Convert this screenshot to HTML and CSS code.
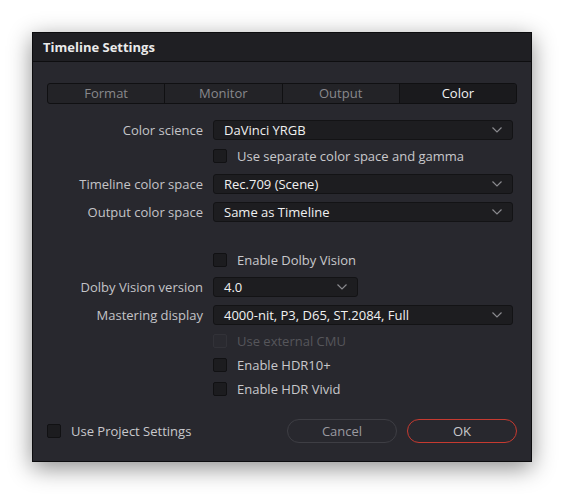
FILE: index.html
```html
<!DOCTYPE html>
<html>
<head>
<meta charset="utf-8">
<link rel="stylesheet" href="styles.css">
</head>
<body>
<div class="dialog">
  <div class="titlebar">Timeline Settings</div>
  <div class="body">
    <div class="tabs">
      <div class="tab">Format</div>
      <div class="tab">Monitor</div>
      <div class="tab">Output</div>
      <div class="tab active">Color</div>
    </div>
    <div class="form">
      <div class="row first">
        <div class="label">Color science</div>
        <div class="select full"><span>DaVinci YRGB</span><svg class="chev" width="10" height="6" viewBox="0 0 10 6"><path d="M0.5 0.5 L5 5 L9.5 0.5" fill="none" stroke="#8a8a8e" stroke-width="1.2"/></svg></div>
      </div>
      <div class="row tight">
        <div class="label"></div>
        <label class="check"><span class="box"></span><span>Use separate color space and gamma</span></label>
      </div>
      <div class="row">
        <div class="label">Timeline color space</div>
        <div class="select full"><span>Rec.709 (Scene)</span><svg class="chev" width="10" height="6" viewBox="0 0 10 6"><path d="M0.5 0.5 L5 5 L9.5 0.5" fill="none" stroke="#8a8a8e" stroke-width="1.2"/></svg></div>
      </div>
      <div class="row">
        <div class="label">Output color space</div>
        <div class="select full"><span>Same as Timeline</span><svg class="chev" width="10" height="6" viewBox="0 0 10 6"><path d="M0.5 0.5 L5 5 L9.5 0.5" fill="none" stroke="#8a8a8e" stroke-width="1.2"/></svg></div>
      </div>
      <div class="row section">
        <div class="label"></div>
        <label class="check"><span class="box"></span><span>Enable Dolby Vision</span></label>
      </div>
      <div class="row snug">
        <div class="label">Dolby Vision version</div>
        <div class="select short"><span>4.0</span><svg class="chev" width="10" height="6" viewBox="0 0 10 6"><path d="M0.5 0.5 L5 5 L9.5 0.5" fill="none" stroke="#8a8a8e" stroke-width="1.2"/></svg></div>
      </div>
      <div class="row">
        <div class="label">Mastering display</div>
        <div class="select full"><span>4000-nit, P3, D65, ST.2084, Full</span><svg class="chev" width="10" height="6" viewBox="0 0 10 6"><path d="M0.5 0.5 L5 5 L9.5 0.5" fill="none" stroke="#8a8a8e" stroke-width="1.2"/></svg></div>
      </div>
      <div class="row tight">
        <div class="label"></div>
        <label class="check disabled"><span class="box"></span><span>Use external CMU</span></label>
      </div>
      <div class="row close">
        <div class="label"></div>
        <label class="check"><span class="box"></span><span>Enable HDR10+</span></label>
      </div>
      <div class="row close">
        <div class="label"></div>
        <label class="check"><span class="box"></span><span>Enable HDR Vivid</span></label>
      </div>
    </div>
    <div class="footer">
      <label class="check"><span class="box"></span><span>Use Project Settings</span></label>
      <div class="buttons">
        <div class="btn">Cancel</div>
        <div class="btn ok">OK</div>
      </div>
    </div>
  </div>
</div>
</body>
</html>
```
FILE: styles.css
```css
html, body {
  margin: 0;
  padding: 0;
  background: #ffffff;
}
body {
  padding: 32px;
  font-family: "Open Sans", "Noto Sans", sans-serif;
  font-size: 13px;
}
.dialog {
  width: 500px;
  height: 430px;
  box-sizing: border-box;
  border: 1px solid #0c0c0e;
  background: #28282e;
  box-shadow: 0 6px 22px rgba(0, 0, 0, 0.45);
  display: flex;
  flex-direction: column;
}
.titlebar {
  height: 28px;
  line-height: 28px;
  background: #1f1f23;
  border-bottom: 1px solid #0e0e10;
  padding-left: 10px;
  color: #eaeaea;
  font-weight: bold;
}
.body {
  flex: 1;
  display: flex;
  flex-direction: column;
  padding: 21px 14px 18px 14px;
}
.tabs {
  display: flex;
  height: 21px;
  box-sizing: border-box;
  border: 1px solid #101012;
  border-radius: 3px;
  background: #232327;
  overflow: hidden;
}
.tab {
  flex: 1;
  text-align: center;
  line-height: 19px;
  color: #88888c;
  border-left: 1px solid #101012;
}
.tab:first-child {
  border-left: none;
}
.tab.active {
  background: #1a1a1d;
  color: #f2f2f2;
}
.form {
  display: flex;
  flex-direction: column;
  padding-top: 8px;
}
.row {
  display: grid;
  grid-template-columns: 156px 300px;
  column-gap: 10px;
  height: 20px;
  align-items: center;
  margin-top: 8px;
}
.row.tight { margin-top: 6px; }
.row.snug { margin-top: 7px; }
.row.close { margin-top: 4px; }
.row.section { margin-top: 28px; }
.label {
  text-align: right;
  color: #c4c4c8;
  white-space: nowrap;
}
.select {
  height: 20px;
  box-sizing: border-box;
  background: #1d1d20;
  border: 1px solid #131315;
  border-radius: 3px;
  display: flex;
  align-items: center;
  justify-content: space-between;
  padding: 0 10px 0 10px;
  color: #f0f0f0;
}
.select.short {
  width: 145px;
}
.chev {
  display: block;
}
.check {
  display: flex;
  align-items: center;
  gap: 10px;
  color: #c8c8cc;
  white-space: nowrap;
}
.box {
  width: 14px;
  height: 14px;
  box-sizing: border-box;
  background: #1c1c1f;
  border: 1px solid #111113;
  border-radius: 2px;
}
.check.disabled {
  color: #56565b;
}
.check.disabled .box {
  background: #2a2a30;
  border-color: #323238;
}
.footer {
  margin-top: auto;
  display: flex;
  align-items: center;
  justify-content: space-between;
}
.buttons {
  display: flex;
  gap: 10px;
}
.btn {
  width: 110px;
  height: 24px;
  box-sizing: border-box;
  border: 1px solid #3e3e44;
  border-radius: 12px;
  text-align: center;
  line-height: 22px;
  color: #9a9aa0;
}
.btn.ok {
  border-color: #c63a30;
  color: #c8c8cc;
}
```
